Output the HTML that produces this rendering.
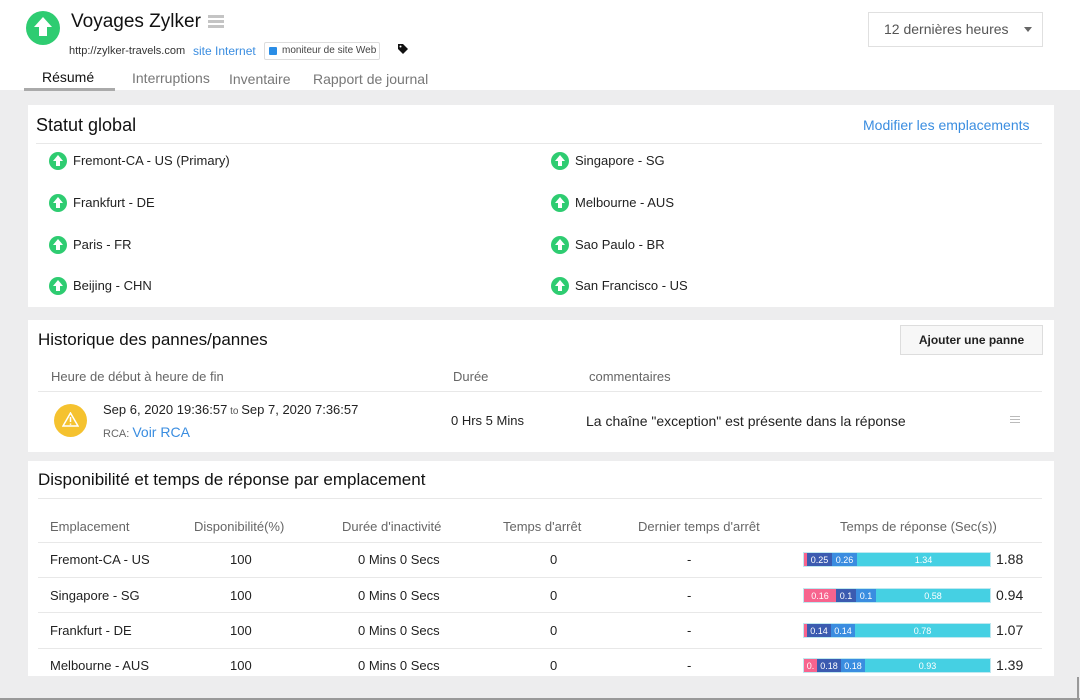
<!DOCTYPE html>
<html><head><meta charset="utf-8"><style>
*{box-sizing:border-box;margin:0;padding:0}
body{width:1080px;height:700px;overflow:hidden;background:#ededee;font-family:"Liberation Sans",sans-serif;color:#222;position:relative}
.abs{position:absolute;white-space:nowrap}
.hdr{position:absolute;left:0;top:0;width:1080px;height:90px;background:#fff}
.card{position:absolute;left:28px;width:1026px;background:#fff}
.up{position:absolute;width:18px;height:18px;border-radius:50%;background:#2ecc71}
.up:after{content:"";position:absolute;left:4px;top:3px;border-left:5px solid transparent;border-right:5px solid transparent;border-bottom:6px solid #fff}
.up:before{content:"";position:absolute;left:7px;top:8px;width:4px;height:6px;background:#fff}
.loc{font-size:13px;color:#222}
.th{font-size:13px;color:#666}
.td{font-size:13px;color:#222}
.bar{position:absolute;left:803px;height:15px;display:flex;font-size:9px;color:#fff;line-height:15px;border:1px solid #bfe8f0}
.bar span{text-align:center;overflow:hidden}
.p{background:#f7648e}.d{background:#3b5bb0}.m{background:#3a8de0}.c{background:#45d0e3}
.hl{position:absolute;height:1px;background:#e8e8e8}
</style></head><body>
<div class="hdr"></div>
<div style="position:absolute;left:26px;top:11px;width:34px;height:34px;border-radius:50%;background:#2ecc71"></div>
<div style="position:absolute;left:34px;top:17px;border-left:9px solid transparent;border-right:9px solid transparent;border-bottom:10px solid #fff"></div>
<div style="position:absolute;left:39px;top:26px;width:8px;height:10px;background:#fff"></div>
<div class="abs" style="left:71px;top:11px;font-size:19px;color:#111">Voyages Zylker</div>
<div style="position:absolute;left:208px;top:15px;width:16px;height:3px;background:#c4c4c4;box-shadow:0 5px 0 #c4c4c4,0 10px 0 #c4c4c4"></div>
<div class="abs" style="left:69px;top:45px;font-size:11px;color:#333">http://zylker-travels.com</div>
<div class="abs" style="left:193px;top:44px;font-size:12px;color:#3a8de0">site Internet</div>
<div class="abs" style="left:264px;top:42px;width:116px;height:18px;border:1px solid #ddd;border-radius:2px;font-size:10px;color:#444;line-height:16px;padding-left:17px">moniteur de site Web</div>
<div style="position:absolute;left:269px;top:47px;width:8px;height:8px;background:#2a8de6;border-radius:1px"></div>
<svg style="position:absolute;left:397px;top:43px" width="12" height="12" viewBox="0 0 12 12"><path d="M1 1h5l5 5-5 5-5-5z" fill="#111"/><circle cx="3.5" cy="3.5" r="1" fill="#fff"/></svg>
<div class="abs" style="left:42px;top:69px;font-size:14px;color:#111">Résumé</div>
<div style="position:absolute;left:24px;top:88px;width:91px;height:3px;background:#aaa"></div>
<div class="abs" style="left:132px;top:70px;font-size:14px;color:#777">Interruptions</div>
<div class="abs" style="left:229px;top:71px;font-size:14px;color:#777">Inventaire</div>
<div class="abs" style="left:313px;top:71px;font-size:14px;color:#777">Rapport de journal</div>
<div class="abs" style="left:868px;top:12px;width:175px;height:35px;border:1px solid #e0e0e0;font-size:14px;color:#555;line-height:33px;padding-left:15px">12 dernières heures</div>
<div style="position:absolute;left:1024px;top:27px;border-left:4px solid transparent;border-right:4px solid transparent;border-top:5px solid #666"></div>

<div class="card" style="top:105px;height:202px">
<div class="abs" style="left:8px;top:10px;font-size:18px;color:#111">Statut global</div>
<div class="abs" style="left:835px;top:12px;font-size:14px;color:#3a8de0">Modifier les emplacements</div>
<div class="hl" style="left:8px;top:38px;width:1006px"></div>
</div>
<div class="up" style="left:49px;top:152px"></div><div class="abs loc" style="left:73px;top:153px">Fremont-CA - US (Primary)</div>
<div class="up" style="left:49px;top:194px"></div><div class="abs loc" style="left:73px;top:195px">Frankfurt - DE</div>
<div class="up" style="left:49px;top:236px"></div><div class="abs loc" style="left:73px;top:237px">Paris - FR</div>
<div class="up" style="left:49px;top:277px"></div><div class="abs loc" style="left:73px;top:278px">Beijing - CHN</div>
<div class="up" style="left:551px;top:152px"></div><div class="abs loc" style="left:575px;top:153px">Singapore - SG</div>
<div class="up" style="left:551px;top:194px"></div><div class="abs loc" style="left:575px;top:195px">Melbourne - AUS</div>
<div class="up" style="left:551px;top:236px"></div><div class="abs loc" style="left:575px;top:237px">Sao Paulo - BR</div>
<div class="up" style="left:551px;top:277px"></div><div class="abs loc" style="left:575px;top:278px">San Francisco - US</div>

<div class="card" style="top:320px;height:132px"></div>
<div class="abs" style="left:38px;top:330px;font-size:17px;color:#111">Historique des pannes/pannes</div>
<div class="abs" style="left:900px;top:325px;width:143px;height:30px;border:1px solid #ddd;background:#f7f7f7;font-size:12px;font-weight:bold;line-height:28px;text-align:center;color:#222">Ajouter une panne</div>
<div class="abs th" style="left:51px;top:369px">Heure de début à heure de fin</div>
<div class="abs th" style="left:453px;top:369px">Durée</div>
<div class="abs th" style="left:589px;top:369px">commentaires</div>
<div class="hl" style="left:38px;top:391px;width:1004px"></div>
<div style="position:absolute;left:54px;top:404px;width:33px;height:33px;border-radius:50%;background:#f5c22f"></div>
<svg style="position:absolute;left:62px;top:412px" width="17" height="15" viewBox="0 0 17 15"><path d="M8.5 1L16 14H1z" fill="none" stroke="#fff" stroke-width="1.5"/><path d="M8.5 5v5M8.5 11.5v1.2" stroke="#fff" stroke-width="1.5"/></svg>
<div class="abs td" style="left:103px;top:402px">Sep 6, 2020 19:36:57<span style="font-size:10px;color:#555"> to </span>Sep 7, 2020 7:36:57</div>
<div class="abs" style="left:103px;top:424px;font-size:11px;color:#666">RCA: <span style="font-size:14px;color:#3a8de0">Voir RCA</span></div>
<div class="abs td" style="left:451px;top:413px">0 Hrs 5 Mins</div>
<div class="abs td" style="left:586px;top:413px;font-size:14px">La chaîne "exception" est présente dans la réponse</div>
<div style="position:absolute;left:1010px;top:416px;width:10px;height:1px;background:#bbb;box-shadow:0 3px 0 #bbb,0 6px 0 #bbb"></div>

<div class="card" style="top:461px;height:215px"></div>
<div class="abs" style="left:38px;top:470px;font-size:17px;color:#111">Disponibilité et temps de réponse par emplacement</div>
<div class="hl" style="left:38px;top:498px;width:1004px"></div>
<div class="abs th" style="left:50px;top:519px">Emplacement</div>
<div class="abs th" style="left:194px;top:519px">Disponibilité(%)</div>
<div class="abs th" style="left:342px;top:519px">Durée d'inactivité</div>
<div class="abs th" style="left:503px;top:519px">Temps d'arrêt</div>
<div class="abs th" style="left:638px;top:519px">Dernier temps d'arrêt</div>
<div class="abs th" style="left:840px;top:519px">Temps de réponse (Sec(s))</div>
<div class="hl" style="left:38px;top:542px;width:1004px"></div>
<div class="hl" style="left:38px;top:577px;width:1004px"></div>
<div class="hl" style="left:38px;top:612px;width:1004px"></div>
<div class="hl" style="left:38px;top:648px;width:1004px"></div>

<div class="abs td" style="left:50px;top:552px">Fremont-CA - US</div><div class="abs td" style="left:230px;top:552px">100</div><div class="abs td" style="left:358px;top:552px">0 Mins 0 Secs</div><div class="abs td" style="left:550px;top:552px">0</div><div class="abs td" style="left:687px;top:552px">-</div>
<div class="bar" style="top:552px;width:188px"><span class="p" style="width:3px"></span><span class="d" style="width:25px">0.25</span><span class="m" style="width:25px">0.26</span><span class="c" style="flex:1">1.34</span></div><div class="abs" style="left:996px;top:551px;font-size:14px">1.88</div>

<div class="abs td" style="left:50px;top:588px">Singapore - SG</div><div class="abs td" style="left:230px;top:588px">100</div><div class="abs td" style="left:358px;top:588px">0 Mins 0 Secs</div><div class="abs td" style="left:550px;top:588px">0</div><div class="abs td" style="left:687px;top:588px">-</div>
<div class="bar" style="top:588px;width:188px"><span class="p" style="width:32px">0.16</span><span class="d" style="width:20px">0.1</span><span class="m" style="width:20px">0.1</span><span class="c" style="flex:1">0.58</span></div><div class="abs" style="left:996px;top:587px;font-size:14px">0.94</div>

<div class="abs td" style="left:50px;top:623px">Frankfurt - DE</div><div class="abs td" style="left:230px;top:623px">100</div><div class="abs td" style="left:358px;top:623px">0 Mins 0 Secs</div><div class="abs td" style="left:550px;top:623px">0</div><div class="abs td" style="left:687px;top:623px">-</div>
<div class="bar" style="top:623px;width:188px"><span class="p" style="width:3px"></span><span class="d" style="width:24px">0.14</span><span class="m" style="width:24px">0.14</span><span class="c" style="flex:1">0.78</span></div><div class="abs" style="left:996px;top:622px;font-size:14px">1.07</div>

<div class="abs td" style="left:50px;top:658px">Melbourne - AUS</div><div class="abs td" style="left:230px;top:658px">100</div><div class="abs td" style="left:358px;top:658px">0 Mins 0 Secs</div><div class="abs td" style="left:550px;top:658px">0</div><div class="abs td" style="left:687px;top:658px">-</div>
<div class="bar" style="top:658px;width:188px"><span class="p" style="width:13px">0.</span><span class="d" style="width:24px">0.18</span><span class="m" style="width:24px">0.18</span><span class="c" style="flex:1">0.93</span></div><div class="abs" style="left:996px;top:657px;font-size:14px">1.39</div>

<div style="position:absolute;left:0;top:698px;width:1080px;height:2px;background:#999"></div>
<div style="position:absolute;left:1077px;top:677px;width:2px;height:23px;background:#999"></div>
</body></html>
